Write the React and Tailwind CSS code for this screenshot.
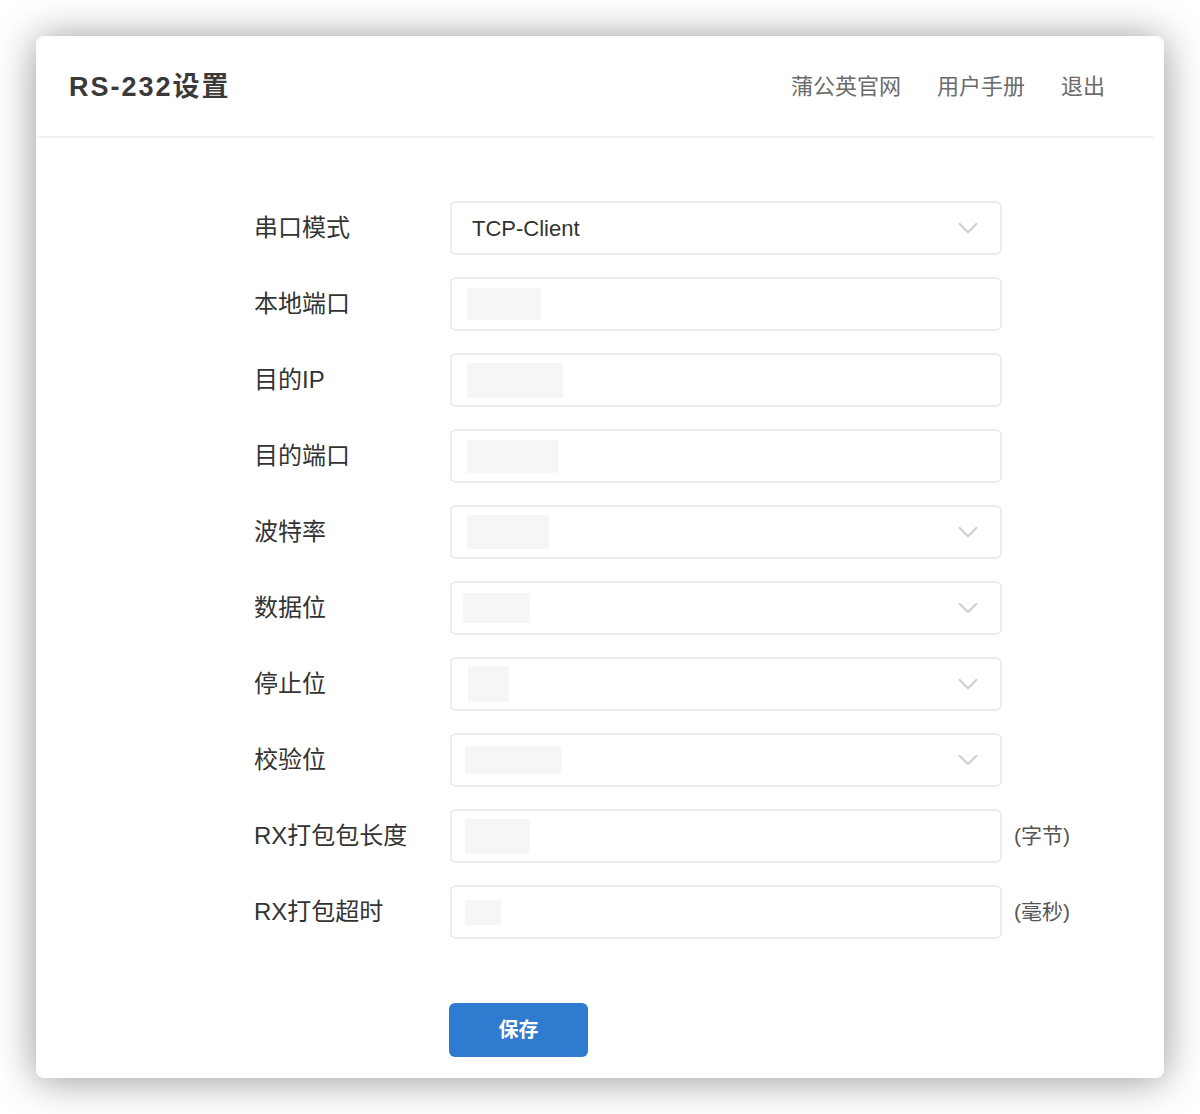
import React from 'react';
import { ChevronDown } from 'lucide-react';

const rows = [
  { label: '串口模式', select: true, value: 'TCP-Client' },
  { label: '本地端口', blk: [74, 32, 17] },
  { label: '目的IP', blk: [96, 35, 17] },
  { label: '目的端口', blk: [91, 33, 17] },
  { label: '波特率', select: true, blk: [82, 34, 17] },
  { label: '数据位', select: true, blk: [67, 30, 13] },
  { label: '停止位', select: true, blk: [41, 36, 18] },
  { label: '校验位', select: true, blk: [97, 28, 15] },
  { label: 'RX打包包长度', blk: [65, 35, 15], unit: '(字节)' },
  { label: 'RX打包超时', blk: [36, 25, 15], unit: '(毫秒)' },
];

const font = { fontFamily: '"Liberation Sans", "Noto Sans CJK SC", sans-serif' };

const Field = ({ row }) => (
  <div className="flex items-center h-[54px]">
    <div className="w-[196px] text-[24px] text-[#333]">{row.label}</div>
    <div className="w-[552px] h-[54px] border-2 border-[#ececec] rounded-md flex items-center justify-between pr-[15px]">
      {row.value ? (
        <span className="pl-[20px] text-[22px] text-[#333]">{row.value}</span>
      ) : (
        <span
          className="block bg-[#f6f6f6]"
          style={{ width: row.blk[0], height: row.blk[1], marginLeft: row.blk[2] - 2 }}
        />
      )}
      {row.select && <ChevronDown size={34} strokeWidth={1.4} className="text-[#cdcdcd]" />}
    </div>
    {row.unit && <span className="ml-[12px] text-[21px] text-[#555]">{row.unit}</span>}
  </div>
);

const App = () => {
  return (
    <div className="w-[1200px] h-[1114px] bg-white p-[36px]" style={font}>
      <div className="h-[1042px] bg-white rounded-lg shadow-[0_2px_40px_rgba(0,0,0,0.42)] flex flex-col">
        <header className="h-[100px] flex items-center justify-between pl-[33px] pr-[59px]">
          <h1 className="text-[27px] font-semibold text-[#3a3a3a] pt-[2px] tracking-[2px]">
            RS-232设置
          </h1>
          <nav className="flex gap-[36px] text-[22px] text-[#6b6b6b]">
            <a href="#">蒲公英官网</a>
            <a href="#">用户手册</a>
            <a href="#">退出</a>
          </nav>
        </header>
        <div className="h-[2px] bg-[#f3f3f3] mr-[10px]" />

        <div className="flex-1 pl-[218px] pt-[63px]">
          <div className="flex flex-col gap-[22px]">
            {rows.map((r) => (
              <Field key={r.label} row={r} />
            ))}
          </div>
          <div className="pl-[195px] mt-[64px]">
            <button className="w-[139px] h-[54px] rounded-md bg-[#2f7bcf] text-white text-[20px] font-bold">
              保存
            </button>
          </div>
        </div>
      </div>
    </div>
  );
};

export default App;
